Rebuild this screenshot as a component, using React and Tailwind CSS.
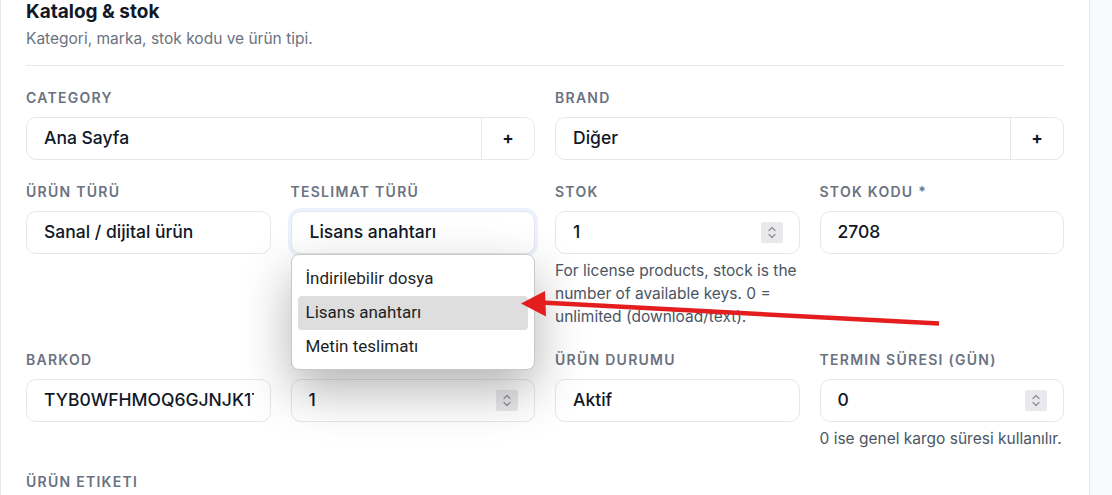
import React from "react";

const font = { fontFamily: "Inter, 'Noto Sans', sans-serif" };

function Label({ children }) {
  return (
    <div className="mb-[9px] whitespace-nowrap text-[14px] font-semibold uppercase leading-5 tracking-[0.09em] text-[#6b7280]">
      {children}
    </div>
  );
}

function Spinner() {
  return (
    <div className="flex h-[21px] w-[22px] shrink-0 items-center justify-center rounded-[2px] bg-[#e8e8ed]">
      <svg width="10" height="15" viewBox="0 0 10 15" fill="none" stroke="#8e8e96" strokeWidth="1.2" strokeLinecap="round" strokeLinejoin="round">
        <path d="M2 5.5 L5 2.5 L8 5.5" />
        <path d="M2 9.5 L5 12.5 L8 9.5" />
      </svg>
    </div>
  );
}

function Field({ value, spinner, className = "" }) {
  return (
    <div
      className={
        "flex h-[43px] items-center justify-between gap-2 rounded-[10px] border border-[#e5e7eb] bg-white pl-[17px] pr-[16px] text-[17.5px] font-medium text-[#111827] " +
        className
      }
    >
      <span className="min-w-0 overflow-hidden whitespace-nowrap">{value}</span>
      {spinner && <Spinner />}
    </div>
  );
}

function AddField({ value }) {
  return (
    <div className="flex h-[43px] items-stretch rounded-[10px] border border-[#e5e7eb] bg-white text-[17.5px] font-medium text-[#111827]">
      <div className="flex flex-1 items-center pl-[17px]">{value}</div>
      <div className="flex w-[53px] items-center justify-center border-l border-[#e5e7eb] text-[17px] font-bold">+</div>
    </div>
  );
}

function Help({ children }) {
  return <p className="mt-[5px] text-[15.5px] leading-[23px] text-[#4b5563]">{children}</p>;
}

const options = ["İndirilebilir dosya", "Lisans anahtarı", "Metin teslimatı"];

export default function App() {
  return (
    <div className="flex h-[495px] w-[1112px] overflow-hidden bg-[#f9fafb]" style={font}>
      <div className="relative w-[1090px] shrink-0 border-x border-[#e5e7eb] bg-white px-[25px]">
        <h2 className="text-[19px] font-bold leading-6 text-[#111827]">Katalog &amp; stok</h2>
        <p className="mt-[5px] text-[15.5px] leading-5 text-[#6b7280]">Kategori, marka, stok kodu ve ürün tipi.</p>
        <div className="mt-4 h-px bg-[#e5e7eb]" />

        <div className="grid grid-cols-4 gap-x-5 gap-y-[22px] pt-[22px]">
          <div className="col-span-2">
            <Label>Category</Label>
            <AddField value="Ana Sayfa" />
          </div>
          <div className="col-span-2">
            <Label>Brand</Label>
            <AddField value="Diğer" />
          </div>

          <div>
            <Label>Ürün türü</Label>
            <Field value="Sanal / dijital ürün" />
          </div>
          <div>
            <Label>Teslimat türü</Label>
            <div className="relative">
              <Field value="Lisans anahtarı" className="border-[#7ea6f2] pl-[18px] ring-[3px] ring-[#3b82f6]/10" />
              <div
                className="absolute left-0 right-0 top-full z-10 rounded-[8px] border border-[#c9c9c9] bg-white px-[6px] pb-[5px] pt-[7px] shadow-[0_20px_50px_rgba(0,0,0,0.3)]"
                style={{ fontFamily: "Roboto, 'Noto Sans', sans-serif" }}
              >
                {options.map((o, i) => (
                  <div
                    key={o}
                    className={
                      "flex h-[34px] items-center rounded-[4px] px-[8px] text-[17px] text-[#1f1f1f] " +
                      (i === 1 ? "bg-[#dedede]" : "")
                    }
                  >
                    {o}
                  </div>
                ))}
              </div>
            </div>
          </div>
          <div>
            <Label>Stok</Label>
            <Field value="1" spinner />
            <Help>For license products, stock is the number of available keys. 0 = unlimited (download/text).</Help>
          </div>
          <div>
            <Label>Stok kodu *</Label>
            <Field value="2708" />
          </div>

          <div>
            <Label>Barkod</Label>
            <Field value="TYB0WFHMOQ6GJNJK1T" />
          </div>
          <div>
            <Label>Min. sipariş</Label>
            <Field value="1" spinner />
          </div>
          <div>
            <Label>Ürün durumu</Label>
            <Field value="Aktif" />
          </div>
          <div>
            <Label>Termin süresi (gün)</Label>
            <Field value="0" spinner />
            <Help>0 ise genel kargo süresi kullanılır.</Help>
          </div>

          <div className="col-span-4">
            <Label>Ürün etiketi</Label>
          </div>
        </div>

        {/* annotation arrow pointing at the highlighted option */}
        <svg className="pointer-events-none absolute left-0 top-0 z-20" width="1090" height="495" viewBox="0 0 1090 495">
          <line x1="938" y1="323.5" x2="540" y2="302.5" stroke="#e41e1e" strokeWidth="4.5" />
          <polygon points="520,303.5 544,291 545,316.5" fill="#e41e1e" />
        </svg>
      </div>
    </div>
  );
}
